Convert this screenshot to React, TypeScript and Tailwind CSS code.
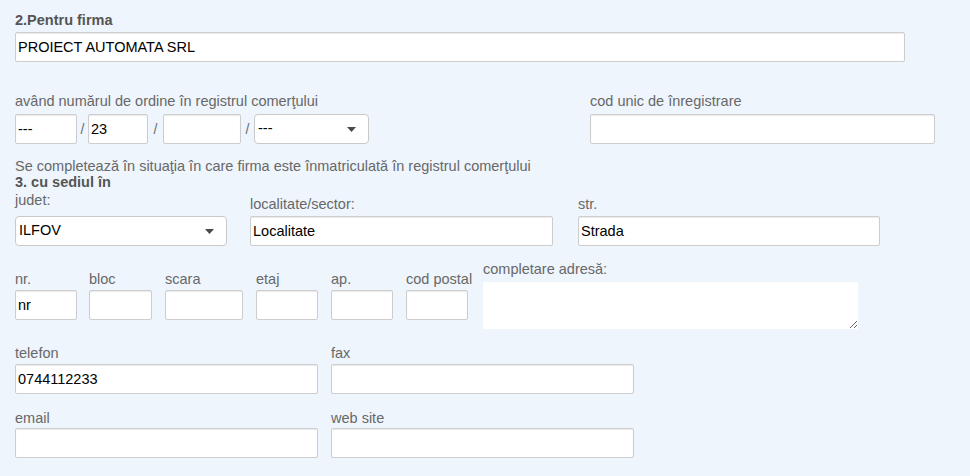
import React from "react";

const font = { fontFamily: '"Liberation Sans", Arial, sans-serif' };

function Field({ value = "", className = "" }: { value?: string; className?: string }) {
  return (
    <input
      readOnly
      value={value}
      className={`h-[30px] bg-white border border-[#cdcdcd] rounded-[2px] shadow-[inset_0_1px_1px_rgba(0,0,0,0.08)] pl-[2px] text-[14.5px] text-black outline-none ${className}`}
    />
  );
}

function Select({ value, className = "" }: { value: string; className?: string }) {
  return (
    <div
      className={`h-[30px] bg-white border border-[#c9c9c9] rounded-[4px] flex items-center justify-between pl-[3px] pr-[12px] text-[14.5px] text-black ${className}`}
    >
      <span>{value}</span>
      <svg width="9" height="5" viewBox="0 0 9 5">
        <path d="M0 0h9L4.5 5z" fill="#4a4a4a" />
      </svg>
    </div>
  );
}

function Label({ children, className = "" }: { children: React.ReactNode; className?: string }) {
  return <div className={`text-[14.5px] leading-[16px] text-[#686868] whitespace-nowrap ${className}`}>{children}</div>;
}

export default function App() {
  return (
    <div style={font} className="w-[970px] h-[476px] bg-[#eef5fd] pl-[15px] pt-[12px] overflow-hidden">
      <div className="text-[14.5px] leading-[16px] font-bold text-[#555] mb-[4px]">2.Pentru firma</div>
      <Field value="PROIECT AUTOMATA SRL" className="w-[890px] h-[29px]" />

      <div className="flex mt-[31px]">
        <div className="w-[575px]">
          <Label className="mb-[5px]">având numărul de ordine în registrul comerţului</Label>
          <div className="flex items-center">
            <Field value="---" className="w-[62px]" />
            <span className="w-[11px] text-center text-[14px] text-[#6b6b6b]">/</span>
            <Field value="23" className="w-[60px]" />
            <span className="w-[15px] text-center text-[14px] text-[#6b6b6b]">/</span>
            <Field className="w-[78px]" />
            <span className="w-[13px] text-center text-[14px] text-[#6b6b6b]">/</span>
            <Select value="---" className="w-[115px]" />
          </div>
        </div>
        <div>
          <Label className="mb-[5px]">cod unic de înregistrare</Label>
          <Field className="w-[345px]" />
        </div>
      </div>

      <div className="mt-[14px] text-[14.5px] leading-[16px] text-[#686868]">
        Se completează în situaţia în care firma este înmatriculată în registrul comerţului
      </div>
      <div className="text-[14.5px] leading-[16px] font-bold text-[#555]">3. cu sediul în</div>

      <div className="flex">
        <div className="w-[212px] mr-[23px]">
          <Label className="mt-[2px] mb-[8px]">judet:</Label>
          <Select value="ILFOV" className="w-[212px]" />
        </div>
        <div className="w-[303px] mr-[25px]">
          <Label className="mt-[6px] mb-[4px]">localitate/sector:</Label>
          <Field value="Localitate" className="w-[303px]" />
        </div>
        <div className="w-[302px]">
          <Label className="mt-[6px] mb-[4px]">str.</Label>
          <Field value="Strada" className="w-[302px]" />
        </div>
      </div>

      <div className="flex items-start mt-[15px]">
        {[
          { l: "nr.", w: "w-[62px]", m: "mr-[12px]", v: "nr" },
          { l: "bloc", w: "w-[63px]", m: "mr-[13px]", v: "" },
          { l: "scara", w: "w-[78px]", m: "mr-[13px]", v: "" },
          { l: "etaj", w: "w-[62px]", m: "mr-[13px]", v: "" },
          { l: "ap.", w: "w-[62px]", m: "mr-[13px]", v: "" },
          { l: "cod postal", w: "w-[62px]", m: "mr-[15px]", v: "" },
        ].map((c) => (
          <div key={c.l} className={`${c.w} ${c.m}`}>
            <Label className="mt-[10px] mb-[3px]">{c.l}</Label>
            <Field value={c.v} className={c.w} />
          </div>
        ))}
        <div className="w-[375px]">
          <Label className="mb-[5px]">completare adresă:</Label>
          <textarea
            readOnly
            className="block w-[375px] h-[47px] bg-white border-0 outline-none text-[14px]"
          />
        </div>
      </div>

      <div className="flex mt-[16px]">
        <div className="w-[303px] mr-[13px]">
          <Label className="mb-[3px]">telefon</Label>
          <Field value="0744112233" className="w-[303px]" />
        </div>
        <div className="w-[303px]">
          <Label className="mb-[3px]">fax</Label>
          <Field className="w-[303px]" />
        </div>
      </div>

      <div className="flex mt-[16px]">
        <div className="w-[303px] mr-[13px]">
          <Label className="mb-[2px]">email</Label>
          <Field className="w-[303px]" />
        </div>
        <div className="w-[303px]">
          <Label className="mb-[2px]">web site</Label>
          <Field className="w-[303px]" />
        </div>
      </div>
    </div>
  );
}
